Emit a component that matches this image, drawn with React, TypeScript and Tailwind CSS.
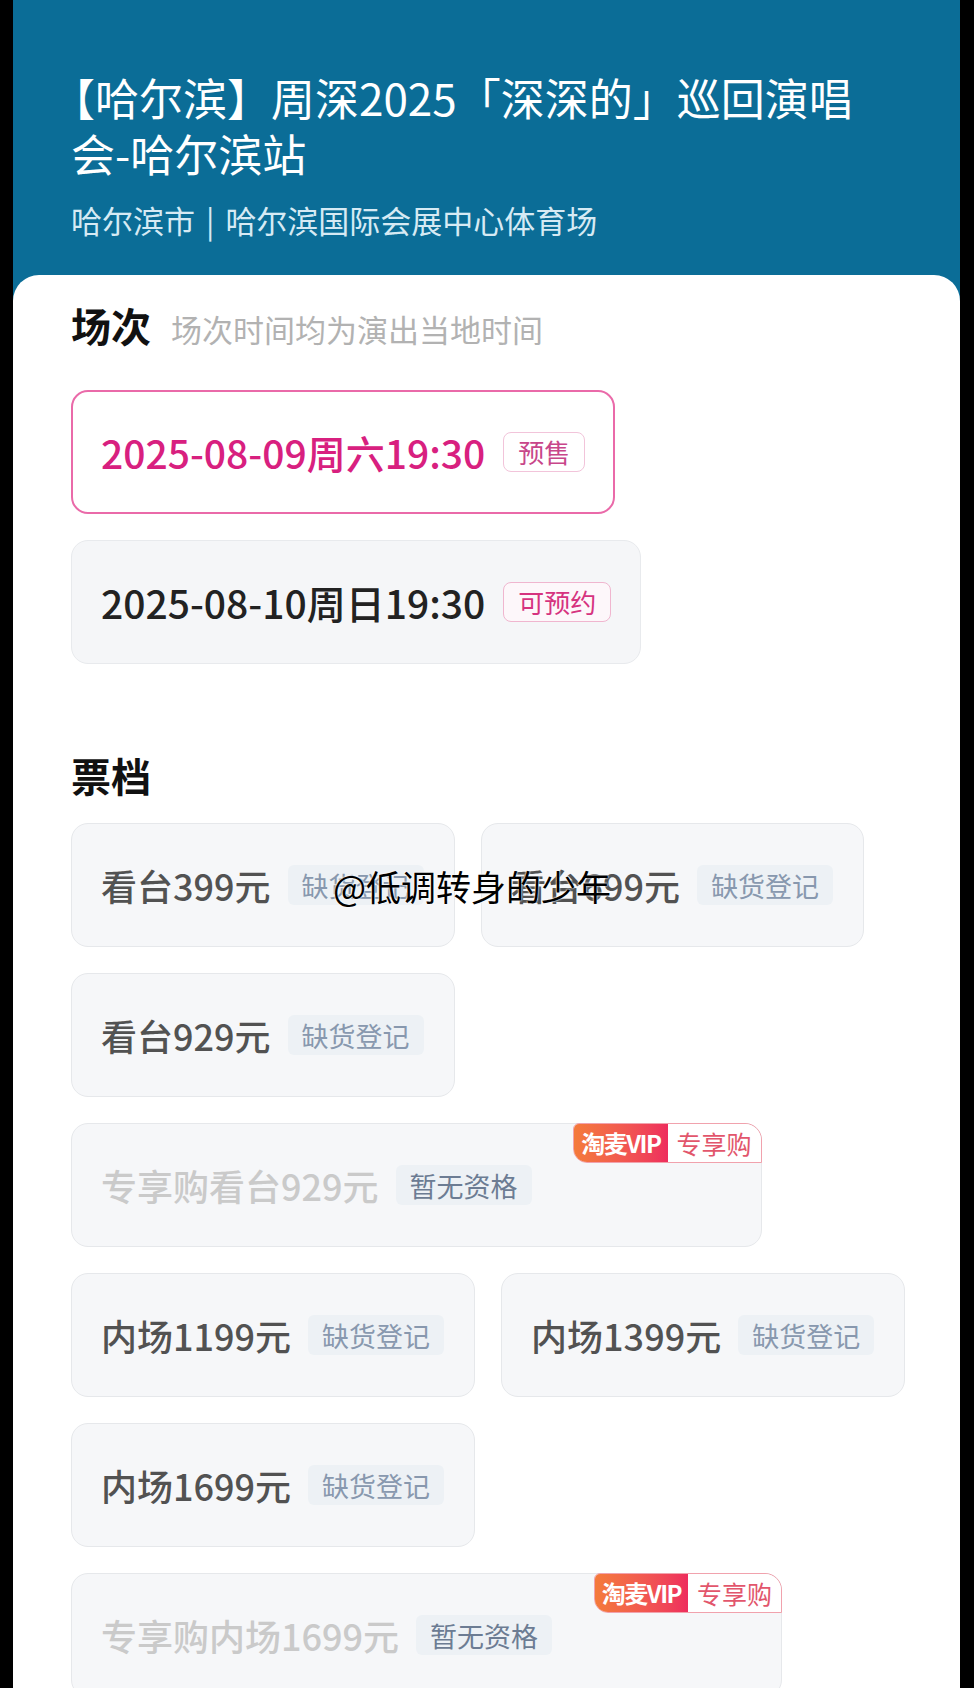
const FONT = "font-['Noto_Sans_CJK_SC','Noto_Sans',sans-serif]";

interface Session {
  time: string;
  tag: string;
  active?: boolean;
}

const sessions: Session[] = [
  { time: "2025-08-09周六19:30", tag: "预售", active: true },
  { time: "2025-08-10周日19:30", tag: "可预约" },
];

interface Ticket {
  name: string;
  status: string;
  vip?: boolean;
}

const rows: Ticket[][] = [
  [
    { name: "看台399元", status: "缺货登记" },
    { name: "看台699元", status: "缺货登记" },
  ],
  [{ name: "看台929元", status: "缺货登记" }],
  [{ name: "专享购看台929元", status: "暂无资格", vip: true }],
  [
    { name: "内场1199元", status: "缺货登记" },
    { name: "内场1399元", status: "缺货登记" },
  ],
  [{ name: "内场1699元", status: "缺货登记" }],
  [{ name: "专享购内场1699元", status: "暂无资格", vip: true }],
];

const SessionCard = ({ time, tag, active = false }: Session) => {
  return (
    <div
      className={`flex h-[124px] items-center gap-[18px] self-start rounded-[17px] ${
        active
          ? "border-2 border-[#ea6aa9] bg-white px-[28px]"
          : "border border-[#e8eaed] bg-[#f5f6f8] px-[29px]"
      }`}
    >
      <span
        className={`text-[39px] leading-none font-medium ${
          active ? "text-[#d8207f]" : "text-[#222222]"
        }`}
      >
        {time}
      </span>
      <span
        className={`flex h-[40px] items-center rounded-[8px] border-[1.5px] px-[14px] text-[26px] leading-none ${
          active
            ? "border-[#f2c4da] bg-white text-[#c8468a]"
            : "border-[#f0b6cf] bg-[#fdf7fa] text-[#d6337f]"
        }`}
      >
        {tag}
      </span>
    </div>
  );
};

const VipTag = () => {
  return (
    <div className="absolute top-[-1px] right-[-1px] flex h-[40px] overflow-hidden rounded-tr-[17px] rounded-bl-[14px] rounded-tl-[6px] border border-[#f1a2ad]">
      <span className="flex items-center bg-gradient-to-r from-[#f47a3a] to-[#ee2d5d] px-[7px] text-[24px] leading-none font-bold tracking-[-1.5px] text-white">
        淘麦VIP
      </span>
      <span className="flex items-center bg-white px-[9px] text-[25px] leading-none text-[#e2566c]">
        专享购
      </span>
    </div>
  );
};

const TicketCard = ({ name, status, vip = false }: Ticket) => {
  return (
    <div
      className={`relative flex h-[124px] items-center gap-[17px] rounded-[17px] border border-[#e6e8eb] bg-[#f6f7f9] pl-[29px] ${
        vip ? "pr-[229px]" : "pr-[30px]"
      }`}
    >
      <span
        className={`text-[36px] leading-none font-medium ${
          vip ? "text-[#cacaca]" : "text-[#525252]"
        }`}
      >
        {name}
      </span>
      <span
        className={`flex h-[40px] items-center rounded-[6px] bg-[#edf1f5] px-[14px] text-[27px] leading-none ${
          vip ? "text-[#6c7c93]" : "text-[#8898ae]"
        }`}
      >
        {status}
      </span>
      {vip && <VipTag />}
    </div>
  );
};

export default function App() {
  return (
    <div className={`relative h-[1688px] w-full overflow-hidden bg-black ${FONT}`}>
      <div className="ml-[13px] flex h-full w-[947px] flex-col bg-[#0b6d97]">
        <header className="pt-[69px] pr-[80px] pb-[35px] pl-[58px]">
          <h1 className="text-[44px] leading-[56px] font-normal text-white [text-indent:-20px]">
            【哈尔滨】周深2025「深深的」巡回演唱会-哈尔滨站
          </h1>
          <p className="mt-[19px] text-[31px] leading-[40px] text-[#d6eaf4]">
            哈尔滨市<span className="mx-[11px]">|</span>哈尔滨国际会展中心体育场
          </p>
        </header>

        <main className="flex flex-1 flex-col rounded-t-[26px] bg-white pt-[26px] pl-[58px]">
          <div className="flex items-baseline gap-[20px]">
            <h2 className="text-[40px] leading-[48px] font-bold text-[#111111]">场次</h2>
            <span className="text-[31px] leading-none text-[#b2b2b2]">场次时间均为演出当地时间</span>
          </div>

          <div className="mt-[41px] flex flex-col gap-[26px]">
            {sessions.map((s) => (
              <SessionCard key={s.time} {...s} />
            ))}
          </div>

          <h2 className="mt-[87px] text-[40px] leading-[48px] font-bold text-[#111111]">票档</h2>

          <div className="mt-[24px] flex flex-col gap-[26px]">
            {rows.map((row, i) => (
              <div key={i} className="flex gap-[26px]">
                {row.map((t) => (
                  <TicketCard key={t.name} {...t} />
                ))}
              </div>
            ))}
          </div>
        </main>
      </div>

      {/* watermark */}
      <div className="absolute top-[868px] left-[333px] text-[35px] leading-none text-black [text-shadow:0_0_2px_#fff,0_0_2px_#fff]">
        @低调转身的少年
      </div>
    </div>
  );
}
